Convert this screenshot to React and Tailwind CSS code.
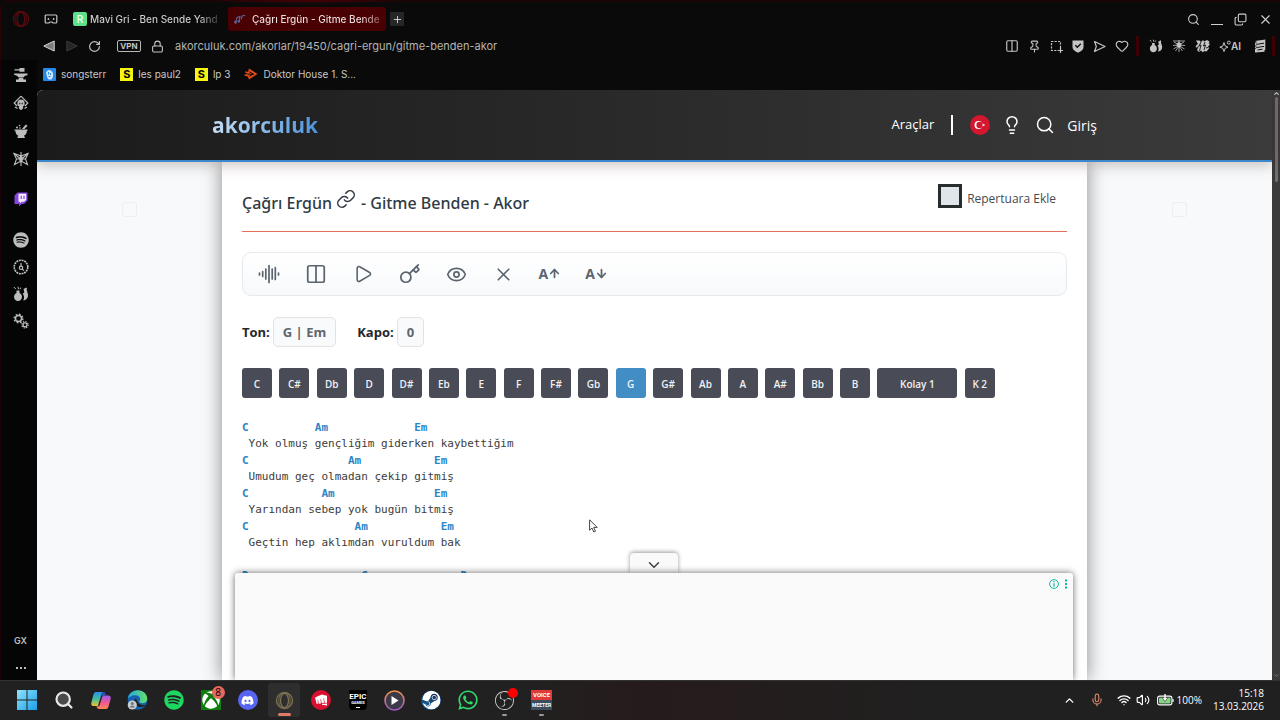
import { useState } from 'react'
import {
  ArrowDown, ArrowUp, ChevronDown, ChevronUp, Columns2, Copy, Eye, Heart, Key, Lightbulb, Link,
  Lock, Mic, Pin, Play, Plus, RotateCw, Search, Volume2, Wifi, X,
} from 'lucide-react'
import { FaDiscord, FaSpotify, FaSteam, FaWhatsapp, FaXbox } from 'react-icons/fa'
import { SiObsstudio, SiRiotgames } from 'react-icons/si'

const KEYS = ['C', 'C#', 'Db', 'D', 'D#', 'Eb', 'E', 'F', 'F#', 'Gb', 'G', 'G#', 'Ab', 'A', 'A#', 'Bb', 'B', 'Kolay 1', 'K 2']

// chords are [column, name] pairs on the monospace grid
const SONG = [
  { chords: [[0, 'C'], [11, 'Am'], [26, 'Em']], lyric: ' Yok olmuş gençliğim giderken kaybettiğim' },
  { chords: [[0, 'C'], [16, 'Am'], [29, 'Em']], lyric: ' Umudum geç olmadan çekip gitmiş' },
  { chords: [[0, 'C'], [12, 'Am'], [29, 'Em']], lyric: ' Yarından sebep yok bugün bitmiş' },
  { chords: [[0, 'C'], [17, 'Am'], [30, 'Em']], lyric: ' Geçtin hep aklımdan vuruldum bak' },
  { chords: [], lyric: '' },
  { chords: [[0, 'D'], [18, 'C'], [33, 'D']], lyric: '' },
]

function chordLine(chords) {
  return chords.reduce((line, [col, name]) => line.padEnd(col) + name, '')
}

/* ---------- Icons ---------- */

function OperaIcon({ className, size = 18 }) {
  return (
    <svg width={size} height={size} viewBox="0 0 20 20" fill="none" stroke="currentColor" className={className}>
      <circle cx="10" cy="10" r="8.4" strokeWidth="1.4" />
      <ellipse cx="10" cy="10" rx="4.2" ry="7.6" strokeWidth="1.4" />
      <path d="M13 2.6c4 3 4 11.8 0 14.8M7 2.6c-4 3-4 11.8 0 14.8" strokeWidth="1" />
    </svg>
  )
}

function GamepadIcon() {
  return (
    <svg width="14" height="12" viewBox="0 0 14 12" fill="none" stroke="currentColor" strokeWidth="1.2">
      <path d="M1.200 3Q1.200 2 2.200 2h9.600q1 0 1 1v6q0 1-1 1H9L8 9H6l-1 1H2.200q-1 0-1-1z" />
      <circle cx="4.400" cy="6" r=".9" fill="currentColor" stroke="none" />
      <circle cx="9.600" cy="6" r=".9" fill="currentColor" stroke="none" />
    </svg>
  )
}

function NotesIcon() {
  return (
    <svg width="12" height="10" viewBox="0 0 12 10" fill="none" stroke="#5f6294" strokeWidth="1.1">
      <path d="M1.800 8 3 3.500l3-.9-1 4.400M7.200 5.500 8.200 2l3-.8" />
      <circle cx="1.500" cy="8.300" r=".9" fill="#5f6294" />
      <circle cx="4.800" cy="7.300" r=".8" fill="#5f6294" />
    </svg>
  )
}

function AnvilIcon() {
  return (
    <svg width="16" height="16" viewBox="0 0 16 16" fill="currentColor">
      <path d="M6.500 1h5v3.800h-5V3.500H1.500V2.300h5zM1 6.500h13.500v1.700c-2.500 0-3.500 1-4 2.300h-5C5 9 3 8.500 1 7.500zM6 11h4l.6 1.500H13V15H3v-2.500h2.400z" />
    </svg>
  )
}

function SkullIcon() {
  return (
    <svg width="16" height="16" viewBox="0 0 16 16" fill="none" stroke="currentColor" strokeWidth="1.2">
      <path d="M8 1.200 14.800 8 12 11M8 1.200 1.200 8 4 11" />
      <path d="M5 8a3 3 0 0 1 6 0v2l-1.500 1v2.200L8 14.500l-1.500-1.300V11L5 10z" fill="currentColor" />
      <path d="M6.300 8.500h1M8.700 8.500h1" stroke="#050505" strokeWidth="1.5" />
      <path d="M2 12l2.500 1.500M14 12l-2.500 1.500" />
    </svg>
  )
}

function MortarIcon() {
  return (
    <svg width="16" height="16" viewBox="0 0 16 16" fill="currentColor">
      <path d="M1.500 6.500h13v1.300h-.6c0 2.600-1.300 4.200-3 5 .5.700 1 1 1 2.200h-7.500c0-1.200.5-1.500 1-2.200-1.700-.8-3-2.400-3-5h-.9z" />
      <path d="m9 6 3.800-4.500 1.700 1.200L11.500 6z" />
      <circle cx="4" cy="4.600" r="1" />
      <circle cx="6.500" cy="2.500" r=".8" />
      <circle cx="7" cy="5" r=".8" />
    </svg>
  )
}

function MothIcon() {
  return (
    <svg width="16" height="16" viewBox="0 0 16 16" fill="none" stroke="currentColor" strokeWidth="1.1">
      <path d="M8 1v14M8 5 1 2.500 3.500 8 1.500 13.500 8 10l6.500 3.500L12.500 8 15 2.500z" />
      <path d="m1 2.500 7 6 7-6M3.500 8h9" />
      <ellipse cx="8" cy="8" rx="1.200" ry="3" fill="currentColor" />
    </svg>
  )
}

function TwitchIcon() {
  return (
    <svg width="14" height="15" viewBox="0 0 14 15" className="mt-[25px]">
      <path d="M3.500.5H13.500v8L10 12H7.500L5 14.500V12H.5V3.500z" fill="#8546e0" />
      <path d="M4.500 1.800h7.700v6L10 9.800H7.800L6 11.300V9.800H4.500z" fill="#f3edfc" />
      <path d="M7.200 3.800v3.200M10 3.800v3.200" stroke="#8546e0" strokeWidth="1.2" />
    </svg>
  )
}

function DialIcon() {
  return (
    <svg width="16" height="16" viewBox="0 0 16 16" fill="none" stroke="currentColor" strokeWidth="1.2">
      <circle cx="8" cy="8" r="6.800" strokeDasharray="2 .7" strokeWidth="1.6" />
      <circle cx="8" cy="8.800" r="1.700" />
      <path d="M8 4v3.200M9.200 10l1.600 1.600" />
    </svg>
  )
}

function FlaskIcon({ size = 16 }) {
  return (
    <svg width={size} height={size} viewBox="0 0 16 16" fill="currentColor">
      <path d="M3.500 4.500h3v2.400c1.700.9 2.500 2.300 2.500 3.900C9 13.500 7.300 15 5 15s-4-1.500-4-4.200c0-1.600.8-3 2.500-3.900z" />
      <path d="m10.500 3 3-1.500.6 1.300-.6.5 1.300 4.500c.8 3.500-.8 6.200-4.600 6.700.8-1.500 1-3 .7-4.500L9.800 7.500l1.500-.9-.4-2.300z" />
      <path d="m.8 1 2 2M5 .8l.5 2.400M7.800 1.600 7 3.200" stroke="currentColor" strokeWidth="1" />
    </svg>
  )
}

function SpiderIcon() {
  return (
    <svg width="14" height="14" viewBox="0 0 14 14" fill="none" stroke="currentColor" strokeWidth=".8">
      <path d="M1 2h12M7 1v12M7 6 2 3M7 6l5-3M7 6 1 6.500M7 6l6 .5M7 6.500 1.500 10M7 6.500 12.500 10M7 7l-3.500 5M7 7l3.500 5" />
      <ellipse cx="7" cy="6" rx="2" ry="2.400" fill="currentColor" />
    </svg>
  )
}

function GlitchIcon() {
  return (
    <svg width="15" height="14" viewBox="0 0 15 14" fill="currentColor">
      <path d="M1 1.500h3.500L6 3l2-2 1 1.500L12 1l2.500 1.500-1 2H15l-1 2-1 1 1 2-2.500 3L9 12l-1 1.500-2-2-2 1.500-2-2 1-2L.5 8l1-2L3 5z" />
      <path d="m6 3-2 4 2-1-1.500 6M10 3 8.500 7l2-1L9 11M2 8.500l2-1M11 9l2-.5" stroke="#0b0b0b" strokeWidth=".9" fill="none" />
    </svg>
  )
}

function StackIcon() {
  return (
    <svg width="12" height="14" viewBox="0 0 12 14" fill="currentColor">
      <path d="m1 2 10.500-1.500-.5 3L2 5zM1.500 6 11 4.500v2.200L1.500 8.200zM1 9.300l9.500-1.500v5L1 13.500zM1 2v8h1.300V2zM11.300 1v10H10V1z" />
      <path d="m3.500 11 5-.8" stroke="#0b0b0b" />
    </svg>
  )
}

function SnapshotIcon() {
  return (
    <svg width="13" height="13" viewBox="0 0 13 13" fill="none" stroke="currentColor" strokeWidth="1.2">
      <path d="M10.500 8V1.500h-9v9H8" strokeDasharray="2.2 1.2" />
      <path d="M10.500 8v5M8 10.500h5" />
    </svg>
  )
}

function ShieldIcon() {
  return (
    <svg width="12" height="13" viewBox="0 0 12 13">
      <path d="M.5.5h11v6.500c0 2.500-2 4.300-5.500 5.700C2.500 11.300.5 9.500.5 7z" fill="currentColor" />
      <path d="m3.300 5.300 2 2 3.500-3.500" fill="none" stroke="#0b0b0b" strokeWidth="1.3" />
    </svg>
  )
}

function PaperPlaneIcon() {
  return (
    <svg width="13" height="13" viewBox="0 0 13 13" fill="none" stroke="currentColor" strokeWidth="1.2" strokeLinejoin="round">
      <path d="M1.500 1.500 12 6.500l-10.500 5 1.800-5z" />
    </svg>
  )
}

function SparkleIcon() {
  return (
    <svg width="12" height="12" viewBox="0 0 12 12" fill="none" stroke="currentColor">
      <path d="M5 2.500 6.200 6 9 7.200 6.200 8.300 5 11.500 3.800 8.300.8 7.200 3.800 6z" />
      <circle cx="9.800" cy="2.600" r="1.500" />
    </svg>
  )
}

function GearsIcon() {
  return (
    <svg width="16" height="16" viewBox="0 0 16 16" fill="none" stroke="currentColor">
      <circle cx="5.500" cy="5.500" r="3" strokeWidth="1.4" />
      <circle cx="5.500" cy="5.500" r="4.300" strokeWidth="1.5" strokeDasharray="1.7 1.67" />
      <circle cx="12" cy="11.800" r="2" strokeWidth="1.3" />
      <circle cx="12" cy="11.800" r="3.200" strokeWidth="1.2" strokeDasharray="1.3 1.21" />
    </svg>
  )
}

function DoktorIcon() {
  return (
    <svg width="14" height="12" viewBox="0 0 14 12" fill="#e2491b">
      <path d="m5 .5 8.500 5.500L5 11.500 3.800 8.500.5 7.800V6.500L3.800 6 .8 4.300l1-1L4 4z" />
      <path d="m5.500 3.800 3.500 2.200-3.500 2.300M3.500 6.200H10" stroke="#0a0a0a" strokeWidth="1" fill="none" />
    </svg>
  )
}

function WaveIcon() {
  return (
    <svg width="22" height="20" viewBox="0 0 22 20" fill="none" stroke="currentColor" strokeWidth="1.7" strokeLinecap="round">
      <path d="M1.500 9v2M4.700 7.500v5M7.800 5v10M11 1.500v17M14.200 5v10M17.300 3.500v12M20.500 9v2" />
    </svg>
  )
}

function FlagIcon() {
  return (
    <svg width="20" height="20" viewBox="0 0 20 20">
      <circle cx="10" cy="10" r="10" fill="#d4162f" />
      <circle cx="8.500" cy="10" r="4" fill="#fff" />
      <circle cx="9.600" cy="10" r="3.200" fill="#d4162f" />
      <path d="m11.600 10 1.300-.4v-1.300l.8 1.100 1.300-.4-.8 1 .8 1-1.300-.4-.8 1.100v-1.300z" fill="#fff" />
    </svg>
  )
}

function WindowsIcon() {
  return (
    <svg width="20" height="20" viewBox="0 0 20 20">
      <linearGradient id="win" x2="1" y2="1">
        <stop stopColor="#8fe3fb" />
        <stop offset="1" stopColor="#1b9fe8" />
      </linearGradient>
      <path d="M0 0h9.500v9.500H0zM10.500 0H20v9.500h-9.500zM0 10.500h9.500V20H0zM10.500 10.500H20V20h-9.500z" fill="url(#win)" />
    </svg>
  )
}

function CopilotIcon() {
  return (
    <svg width="20" height="19" viewBox="0 0 20 19">
      <linearGradient id="copA" x2="0" y2="1">
        <stop stopColor="#2a8ef0" />
        <stop offset=".5" stopColor="#3fc0a0" />
        <stop offset="1" stopColor="#f2c230" />
      </linearGradient>
      <linearGradient id="copB" x2="0" y2="1">
        <stop stopColor="#9a5cf0" />
        <stop offset=".5" stopColor="#f0569a" />
        <stop offset="1" stopColor="#fb8a4c" />
      </linearGradient>
      <path d="M5 1h7c1.500 0 2 1 2.500 2.500L11 5 8.500 13c-.5 1.500-1 2-2.500 2H3c-2.500 0-3.200-1.500-2.500-4L2.500 3.500C3 2 3.500 1 5 1z" fill="url(#copA)" />
      <path d="M15 18H8c-1.500 0-2-1-2.500-2.500L8 15l3-8.500C11.500 5 12 4.500 13.500 4.500H17c2.500 0 3.200 1.500 2.500 4l-2 7C17 17 16.500 18 15 18z" fill="url(#copB)" />
      <path d="m11 4-3.500 11" stroke="#222" strokeWidth="1.2" />
      <path d="M11 1h1.500c1 0 1.600 1 2 3h-3c-1 0-1.500.5-2 1.500z" fill="#2450c8" />
    </svg>
  )
}

function EdgeIcon() {
  return (
    <svg width="21" height="20" viewBox="0 0 21 20">
      <linearGradient id="edgeTop" x2="1">
        <stop stopColor="#27a7e6" />
        <stop offset="1" stopColor="#62df66" />
      </linearGradient>
      <circle cx="10.500" cy="10" r="9.800" fill="#1662b0" />
      <path d="M.7 9C1.200 4 5.500.2 10.700.2c5.600 0 9.600 3.900 9.600 8.300 0 3-2.200 4.700-4.700 4.700-2.300 0-3.400-.9-3.400-1.600 0-.4.900-.9.900-2.500 0-2.200-2-3.900-4.600-3.900C5 5.200 1.500 7 .7 9z" fill="url(#edgeTop)" />
      <path d="M8 8.500c-1.500 2.500-.5 6.500 3 8 3 1.200 6 .3 8-1.700-2 .6-6 .6-8-2C9.900 11.500 10.800 9.500 8 8.500z" fill="#202020" />
      <circle cx="5.300" cy="15" r="4.600" fill="#c9cdd2" />
      <circle cx="5.300" cy="13.600" r="1.500" fill="#70757c" />
      <path d="M2.600 17.600a2.800 2.800 0 0 1 5.400 0z" fill="#70757c" />
    </svg>
  )
}

function MediaIcon() {
  return (
    <svg width="21" height="21" viewBox="0 0 21 21">
      <linearGradient id="media" x2="0" y2="1">
        <stop stopColor="#f0924c" />
        <stop offset="1" stopColor="#a45ac8" />
      </linearGradient>
      <circle cx="10.500" cy="10.500" r="9.500" fill="#3a3b47" stroke="url(#media)" strokeWidth="1.6" />
      <path d="M7.500 6v9l7-4.500z" fill="#fff" />
    </svg>
  )
}

function BatteryIcon() {
  return (
    <svg width="17" height="12" viewBox="0 0 17 12">
      <rect x=".6" y="2.100" width="14.300" height="8.800" rx="2.200" fill="none" stroke="#fff" strokeWidth="1.1" />
      <rect x="2" y="3.500" width="11.500" height="6" rx="1" fill="#86d68a" />
      <path d="M16 5v3" stroke="#fff" strokeWidth="1.2" />
      <path d="M5 3.500 8 7.500l3-4z" fill="#fff" stroke="#202020" strokeWidth=".6" />
      <path d="M8 0v5" stroke="#fff" strokeWidth="1.4" />
    </svg>
  )
}

function NavTriangle({ flip, className }) {
  return (
    <svg width="12" height="12" viewBox="0 0 12 12" className={className}>
      <path d={flip ? 'M.8 1 11.200 6 .8 11z' : 'M11.200 1 .8 6l10.400 5z'} fill="currentColor" fillOpacity=".55" stroke="currentColor" />
    </svg>
  )
}

/* ---------- Browser chrome ---------- */

function TabBar() {
  return (
    <div className="flex items-center h-8 mt-[3px] pr-[7px] text-[10px] font-medium text-[#d4d4d4]">
      <button aria-label="Opera menu" className="w-[39px] flex justify-center text-[#5a0a10]"><OperaIcon /></button>
      <button aria-label="GX Corner" className="w-[22px] flex justify-center text-[#c8c8c8]"><GamepadIcon /></button>
      <div className="flex items-center gap-[3px] w-[155px] ml-[11px]">
        <span className="w-[14px] h-[14px] rounded-[2px] bg-[#5be38c] text-[10px] leading-[14px] text-center text-white">R</span>
        <span className="whitespace-nowrap text-transparent bg-clip-text bg-linear-to-r from-[#d4d4d4] from-85% to-[#3a3a3a]">
          Mavi Gri - Ben Sende Yand
        </span>
      </div>
      <div className="flex items-center gap-[6px] w-[158px] h-6 px-[6px] rounded-[3px] bg-[#490003]">
        <NotesIcon />
        <span className="whitespace-nowrap text-transparent bg-clip-text bg-linear-to-r from-[#f0e4e4] from-85% to-[#8a5254]">
          Çağrı Ergün - Gitme Bende
        </span>
      </div>
      <button aria-label="New tab" className="ml-1 w-[14px] h-[14px] flex items-center justify-center bg-[#262626]">
        <Plus size={11} />
      </button>
      <div className="ml-auto flex items-center gap-[11px] text-[#d0d0d0]">
        <button aria-label="Search tabs"><Search size={13} strokeWidth={2} /></button>
        <button aria-label="Minimize" className="w-3 h-3 border-b border-current"></button>
        <button aria-label="Restore"><Copy size={13} strokeWidth={2} className="-scale-y-100" /></button>
        <button aria-label="Close"><X size={15} strokeWidth={1.8} /></button>
      </div>
    </div>
  )
}

function AddressBar() {
  return (
    <div className="flex items-center h-[22px] pl-[42px] pr-[5px] text-[11px] text-[#c4c4c4]">
      <button aria-label="Back"><NavTriangle className="text-[#d8d8d8]" /></button>
      <button aria-label="Forward" className="ml-[11px]"><NavTriangle flip className="text-[#3c3c3c]" /></button>
      <button aria-label="Reload" className="ml-[10px]"><RotateCw size={13} strokeWidth={2.2} /></button>
      <span className="ml-4 w-6 h-3 border border-[#b8b8b8] rounded-[2px] text-[8px] leading-[10px] font-bold text-center">VPN</span>
      <Lock size={13} className="ml-[10px]" />
      <input
        aria-label="Address"
        defaultValue="akorculuk.com/akorlar/19450/cagri-ergun/gitme-benden-akor"
        className="flex-1 ml-[11px] bg-transparent outline-none text-[#b4b4b4]"
      />
      <div className="flex items-center gap-[9px] mr-px">
        <Columns2 size={14} />
        <Pin size={13} />
        <SnapshotIcon />
        <ShieldIcon />
        <PaperPlaneIcon />
        <Heart size={14} />
      </div>
      <span className="w-[3px] h-5 ml-[6px] mr-[10px] bg-[#3d0004]"></span>
      <div className="flex items-center gap-[9px]">
        <FlaskIcon size={14} />
        <SpiderIcon />
        <GlitchIcon />
        <span className="flex items-center font-semibold text-[10px]"><SparkleIcon />AI</span>
        <span className="ml-1"><StackIcon /></span>
      </div>
      <span className="w-[3px] h-5 ml-[6px] bg-[#3d0004]"></span>
    </div>
  )
}

function BookmarkBar() {
  return (
    <nav className="flex items-center h-[30px] pl-[6px] pb-[2px] gap-[14px] text-[10px] text-[#c8c8c8]">
      <a href="#songsterr" className="flex items-center gap-[5px]">
        <svg width="13" height="13" viewBox="0 0 13 13">
          <rect width="13" height="13" rx="1" fill="#2788e6" />
          <path d="M3 4.500 5 2l3 .5L10 5v4l-1.500 2.500h-3L4 9z" fill="#cfe6fb" />
          <path d="M5.500 4v2.500M7.500 5v2M5.500 8.500h2" stroke="#2788e6" />
        </svg>
        songsterr
      </a>
      <a href="#les-paul" className="flex items-center gap-[5px]">
        <span className="w-[13px] h-[13px] bg-[#f7f312] text-black text-[11px] leading-[13px] font-bold text-center">S</span>
        les paul2
      </a>
      <a href="#lp" className="flex items-center gap-[5px]">
        <span className="w-[13px] h-[13px] bg-[#f7f312] text-black text-[11px] leading-[13px] font-bold text-center">S</span>
        lp 3
      </a>
      <a href="#doktor" className="flex items-center gap-[5px]"><DoktorIcon />Doktor House 1. S...</a>
    </nav>
  )
}

function Sidebar() {
  return (
    <aside className="w-[37px] shrink-0 pl-[3px] pt-[7px] pb-1 flex flex-col items-center border-l border-[#1c0204] text-[#bdbdbd] bg-[#050505]">
      <div className="flex flex-col gap-3">
        <AnvilIcon />
        <SkullIcon />
        <MortarIcon />
        <MothIcon />
      </div>
      <TwitchIcon />
      <div className="flex flex-col gap-[11px] mt-[25px]">
        <FaSpotify size={16} />
        <DialIcon />
        <FlaskIcon />
        <GearsIcon />
      </div>
      <span className="mt-auto text-[9px] leading-4 font-semibold">GX</span>
      <button aria-label="More" className="mt-[11px] h-4 flex items-center gap-[2px]">
        <i className="w-[2px] h-[2px] bg-current"></i>
        <i className="w-[2px] h-[2px] bg-current"></i>
        <i className="w-[2px] h-[2px] bg-current"></i>
      </button>
    </aside>
  )
}

/* ---------- Page ---------- */

function SiteHeader() {
  return (
    <header className="relative z-10 shrink-0 h-[72px] px-5 border-b-2 border-[#3d88cc] bg-linear-to-r from-[#1b1b1b] to-[#3b3b3b] shadow-[0_2px_14px_rgba(60,30,20,0.3)]">
      <div className="max-w-[885px] h-full mx-auto flex items-center text-[13px] text-white">
        <a href="#home" className="pt-[2px] text-[21px] font-bold text-transparent bg-clip-text bg-linear-to-r from-[#c4dcf3] to-[#4a94dc]">akorculuk</a>
        <a href="#araclar" className="ml-auto">Araçlar</a>
        <span className="w-[2px] h-5 ml-[17px] mr-[17px] bg-white"></span>
        <button aria-label="Türkçe"><FlagIcon /></button>
        <button aria-label="Tema" className="ml-3"><Lightbulb size={20} strokeWidth={1.8} /></button>
        <button aria-label="Ara" className="ml-[13px]"><Search size={20} strokeWidth={1.8} /></button>
        <a href="#giris" className="ml-3 text-[14px]">Giriş</a>
      </div>
    </header>
  )
}

function SongToolbar() {
  return (
    <div className="mt-5 h-11 pl-[3px] border border-[#e6eaee] rounded-[9px] bg-linear-to-b from-white to-[#f7f9fb]">
      <div className="grid grid-cols-8 h-full max-w-[374px] text-[#5a646e] *:flex *:items-center *:justify-center">
        <button aria-label="Ritim"><WaveIcon /></button>
        <button aria-label="Sütun"><Columns2 size={22} strokeWidth={1.9} /></button>
        <button aria-label="Kaydır"><Play size={20} strokeWidth={1.9} /></button>
        <button aria-label="Ton"><Key size={22} strokeWidth={1.9} /></button>
        <button aria-label="Göster"><Eye size={21} strokeWidth={1.9} /></button>
        <button aria-label="Kapat"><X size={21} strokeWidth={1.9} /></button>
        <button aria-label="Büyüt" className="text-[14px] font-bold pb-[2px]">A<ArrowUp size={13} strokeWidth={3.2} /></button>
        <button aria-label="Küçült" className="text-[14px] font-bold pb-[2px]">A<ArrowDown size={13} strokeWidth={3.2} /></button>
      </div>
    </div>
  )
}

function SongSheet() {
  const [active, setActive] = useState('G')
  const [saved, setSaved] = useState(false)

  return (
    <main className="w-full max-w-[865px] shrink-0 px-5 bg-white shadow-[0_0_18px_rgba(0,0,0,0.45)]">
      {/* Title */}
      <div className="flex items-center justify-between h-[69px] pr-[11px] pt-[5px]">
        <h1 className="flex items-center gap-[5px] text-[16px] pt-2 font-medium text-[#2f3a44] font-['Noto_Sans',sans-serif]">
          <a href="#artist" className="flex items-center gap-1">Çağrı Ergün <Link size={20} strokeWidth={1.8} className="mb-2" /></a>
          - Gitme Benden - Akor
        </h1>
        <label className="flex items-center gap-[5px] text-[12px] text-[#474b4f]">
          <input
            type="checkbox"
            checked={saved}
            onChange={e => setSaved(e.target.checked)}
            className="appearance-none w-6 h-6 mb-[6px] border-3 border-[#272c2d] bg-[#dfe5e9] checked:bg-[#3d88cc]"
          />
          Repertuara Ekle
        </label>
      </div>
      <hr className="h-px border-0 bg-[#e2705a]" />

      <SongToolbar />

      {/* Key and capo */}
      <div className="flex items-baseline mt-[21px] text-[13px] font-bold text-[#24282c]">
        Ton:
        <span className="ml-[3px] h-[30px] px-[9px] pt-[2px] flex items-center border border-[#dfe3e6] rounded-[5px] bg-[#f9fafb] text-[#60666c]">G | Em</span>
        <span className="ml-[21px]">Kapo:</span>
        <span className="ml-[3px] h-[30px] px-[9px] pt-[2px] flex items-center border border-[#dfe3e6] rounded-[5px] bg-[#f9fafb] text-[#60666c]">0</span>
      </div>

      <div className="flex justify-between max-w-[753px] mt-[21px]">
        {KEYS.map((k) => (
          <button
            key={k}
            onClick={() => setActive(k)}
            className={`h-[30px] pt-[2px] rounded-[3px] text-[10px] font-semibold text-[#f1f2f4] ${k === 'Kolay 1' ? 'w-20' : 'w-[30px]'} ${k === active ? 'bg-[#428dc4]' : 'bg-[#494c56]'}`}
          >
            {k}
          </button>
        ))}
      </div>

      {/* Lyrics */}
      <pre className="mt-[21px] font-['DejaVu_Sans_Mono',monospace] text-[11px] text-[#3c3c3c]">
        {SONG.map((line, i) => (
          <span key={i} className="block">
            {line.chords.length > 0 && <b className="block leading-[17px] text-[#2e86c8]">{chordLine(line.chords)}</b>}
            <span className="block h-4 leading-4">{line.lyric}</span>
          </span>
        ))}
      </pre>
    </main>
  )
}

function AdDrawer() {
  return (
    <div className="absolute bottom-0 inset-x-0 z-10 pr-[2px] flex flex-col items-center">
      <button aria-label="Reklamı gizle" className="w-12 h-5 flex items-center justify-center rounded-t-[4px] bg-[#fafafa] text-[#3f3f3f] shadow-[0_-1px_4px_rgba(0,0,0,0.4)]">
        <ChevronDown size={18} className="mt-1" />
      </button>
      <div className="w-full max-w-[838px] h-[107px] flex justify-end items-start gap-[5px] pt-[6px] pr-[5px] rounded-t-[3px] bg-[#fafafa] shadow-[0_0_7px_rgba(0,0,0,0.6)] text-[#12b5a0]">
        <svg width="10" height="10" viewBox="0 0 10 10" fill="none" stroke="currentColor">
          <circle cx="5" cy="5" r="4.400" />
          <path d="M5 2v1.200M5 4.200v3.600" strokeWidth="1.2" />
        </svg>
        <svg width="4" height="10" viewBox="0 0 4 10" fill="currentColor">
          <path d="M1 .5h2v2H1zM1 4h2v2H1zM1 7.500h2v2H1z" />
        </svg>
      </div>
    </div>
  )
}

function PageView() {
  return (
    <div className="flex flex-1 min-h-0 rounded-tl-[6px] overflow-hidden">
      <div className="relative flex-1 min-w-0 flex flex-col bg-[#f7f9fb] font-['Open_Sans','Noto_Sans',sans-serif]">
        <SiteHeader />
        <div className="flex flex-1 min-h-0 overflow-hidden">
          <div className="flex-1 flex justify-center pt-10"><i className="w-[15px] h-[15px] border border-[#eceef0] rounded-[3px]"></i></div>
          <SongSheet />
          <div className="flex-1 flex justify-center pt-10"><i className="w-[15px] h-[15px] border border-[#eceef0] rounded-[3px]"></i></div>
        </div>
        <AdDrawer />
        <svg width="9" height="14" viewBox="0 0 9 14" className="absolute left-[552px] top-[429px]">
          <path d="M.6.8v10.400l2.400-2.200 1.800 4 1.700-.8-1.800-3.800h3.500z" fill="#fff" stroke="#333" strokeWidth=".9" />
        </svg>
      </div>
      {/* Scrollbar */}
      <div className="w-2 shrink-0 flex flex-col items-center bg-[#3b3b3b] text-[#c8c8c8]">
        <ChevronUp size={7} strokeWidth={4} />
        <span className="w-[3px] h-[85px] rounded-full bg-[#707070]"></span>
        <ChevronDown size={7} strokeWidth={3} className="mt-auto mb-px text-[#777]" />
      </div>
    </div>
  )
}

/* ---------- Taskbar ---------- */

function Taskbar() {
  return (
    <footer className="flex items-center h-10 pl-[9px] pr-4 pb-px border-t border-[#333] bg-linear-to-r from-[#212121] from-40% via-[#261b1c] via-50% to-[#202020] to-75% text-[10px] text-white font-['Open_Sans','Noto_Sans',sans-serif]">
      <div className="grid grid-cols-15 w-[551px] h-full *:relative *:flex *:items-center *:justify-center">
        <button aria-label="Start"><WindowsIcon /></button>
        <button aria-label="Search"><Search size={20} strokeWidth={2.6} fill="#4a4a4a" className="text-[#e8e8e8]" /></button>
        <button aria-label="Copilot"><CopilotIcon /></button>
        <button aria-label="Edge"><EdgeIcon /></button>
        <button aria-label="Spotify"><FaSpotify size={20} className="text-[#1ed760]" /></button>
        <button aria-label="Xbox">
          <span className="w-5 h-5 flex items-center justify-center bg-[#107c10]"><FaXbox size={18} /></span>
          <span className="absolute top-[5px] left-[19px] w-[13px] h-[13px] rounded-full bg-[#e8685e] text-black leading-[13px] text-center">8</span>
        </button>
        <button aria-label="Discord">
          <span className="w-5 h-5 rounded-full flex items-center justify-center bg-[#5865f2]"><FaDiscord size={13} /></span>
        </button>
        <button aria-label="Opera GX">
          <span className="w-8 h-[34px] flex items-center justify-center rounded-[3px] bg-[#2e2e2e]"><OperaIcon size={19} className="text-[#7d7352]" /></span>
          <span className="absolute bottom-[3px] w-[13px] h-[3px] rounded-full bg-[#e07a68]"></span>
        </button>
        <button aria-label="Riot Client">
          <span className="w-5 h-5 rounded-full flex items-center justify-center bg-[#d9102f]"><SiRiotgames size={12} /></span>
        </button>
        <button aria-label="Epic Games">
          <span className="w-[18px] h-5 flex flex-col items-center pt-[3px] rounded-b-[4px] bg-black font-['Roboto',sans-serif]">
            <b className="text-[8px] leading-2">EPIC</b>
            <b className="text-[4px] leading-1">GAMES</b>
            <i className="w-1 h-px mt-[2px] bg-white"></i>
          </span>
        </button>
        <button aria-label="Media Player"><MediaIcon /></button>
        <button aria-label="Steam">
          <span className="w-5 h-5 rounded-full bg-linear-to-b from-[#101d40] to-[#1678b4]"><FaSteam size={20} className="text-white [clip-path:circle(46%)]" /></span>
        </button>
        <button aria-label="WhatsApp"><FaWhatsapp size={22} className="text-[#2fdc6c]" /></button>
        <button aria-label="OBS">
          <SiObsstudio size={19} className="text-[#c8c8c8]" />
          <span className="absolute top-[7px] left-[21px] w-[10px] h-[10px] rounded-full bg-[#f00]"></span>
          <span className="absolute bottom-[3px] w-[5px] h-[2px] rounded-full bg-[#9a9a9a]"></span>
        </button>
        <button aria-label="Voicemeeter">
          <span className="w-[21px] flex flex-col font-['Roboto',sans-serif] leading-[10px] font-bold text-center">
            <span className="bg-[#e03a3a] text-[6px]">VOICE</span>
            <span className="bg-[#3c4c5a] text-[5px]">MEETER</span>
          </span>
          <span className="absolute bottom-[3px] w-[5px] h-[2px] rounded-full bg-[#9a9a9a]"></span>
        </button>
      </div>
      <div className="ml-auto flex items-center">
        <ChevronUp size={13} strokeWidth={2.5} />
        <Mic size={14} className="ml-[14px] text-[#d08468]" />
        <Wifi size={14} strokeWidth={2.4} className="ml-[13px]" />
        <Volume2 size={14} className="ml-[5px]" />
        <span className="ml-[7px] flex items-center gap-[3px]"><BatteryIcon />100%</span>
        <div className="ml-[11px] text-right leading-[13px]">
          <p>15:18</p>
          <p>13.03.2026</p>
        </div>
      </div>
    </footer>
  )
}

export default function App() {
  return (
    <div className="h-screen flex flex-col overflow-hidden bg-[#0a0a0a] font-['Inter',sans-serif]">
      <div className="h-[60px] shrink-0 border-l border-[#2a0306] bg-[radial-gradient(ellipse_100px_4px_at_308px_0,#4a0006,transparent),linear-gradient(to_bottom,#200305_0,#0a0a0a_3px)] rounded-tl-[8px]">
        <TabBar />
        <AddressBar />
      </div>
      <div className="flex flex-1 min-h-0">
        <Sidebar />
        <div className="flex-1 min-w-0 flex flex-col">
          <BookmarkBar />
          <PageView />
        </div>
      </div>
      <Taskbar />
    </div>
  )
}
